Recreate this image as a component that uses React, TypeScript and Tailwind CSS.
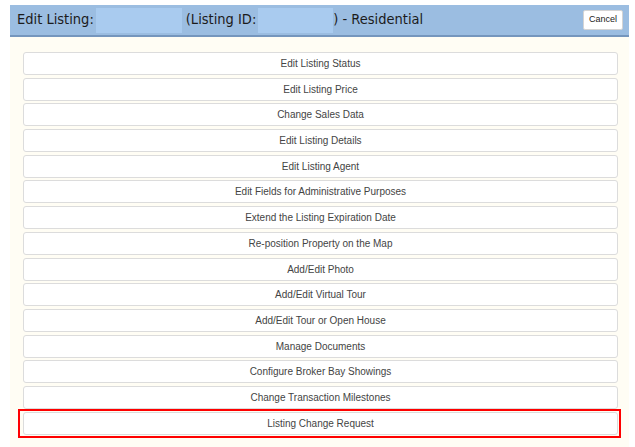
const actions = [
  "Edit Listing Status",
  "Edit Listing Price",
  "Change Sales Data",
  "Edit Listing Details",
  "Edit Listing Agent",
  "Edit Fields for Administrative Purposes",
  "Extend the Listing Expiration Date",
  "Re-position Property on the Map",
  "Add/Edit Photo",
  "Add/Edit Virtual Tour",
  "Add/Edit Tour or Open House",
  "Manage Documents",
  "Configure Broker Bay Showings",
  "Change Transaction Milestones",
  "Listing Change Request",
];

export default function App() {
  return (
    <div className="w-[635px] h-[447px] bg-white overflow-hidden pt-[5px] pl-[10px] pr-[6px]">
      {/* Header bar */}
      <div className="h-[32px] bg-[#9bbde1] border-b-2 border-[#7596bd] flex items-center pl-[7px] pr-[6px] font-['DejaVu_Sans_Condensed','DejaVu_Sans',Verdana,sans-serif] text-[14.5px] text-[#1b1b1b]">
        <span>Edit Listing:</span>
        <span className="ml-[2px] w-[86px] h-[25px] bg-[#a9cbef]" />
        <span className="ml-[4px]">(Listing ID:</span>
        <span className="ml-[2px] w-[75px] h-[25px] bg-[#a9cbef]" />
        <span>) - Residential</span>
        <button className="ml-auto w-[40px] h-[20px] bg-white border border-[#d4d4d4] rounded-[2px] font-['Liberation_Sans',Arial,sans-serif] text-[9px] text-[#222]">
          Cancel
        </button>
      </div>

      {/* Action list */}
      <div className="h-full bg-[#fffdf4] pt-[15px] pl-[13px] pr-[11px] flex flex-col gap-[2.7px] font-['Liberation_Sans',Arial,sans-serif]">
        {actions.map((label, i) => (
          <div
            key={label}
            className="relative h-[23px] shrink-0 bg-white border border-[#dcdcdc] rounded-[3px] flex items-center justify-center text-[10px] text-[#444]"
          >
            {label}
            {i === actions.length - 1 && (
              <span className="absolute -left-[6px] -right-[4px] -top-[4px] -bottom-[4px] border-2 border-[#ff0000] pointer-events-none" />
            )}
          </div>
        ))}
      </div>
    </div>
  );
}
